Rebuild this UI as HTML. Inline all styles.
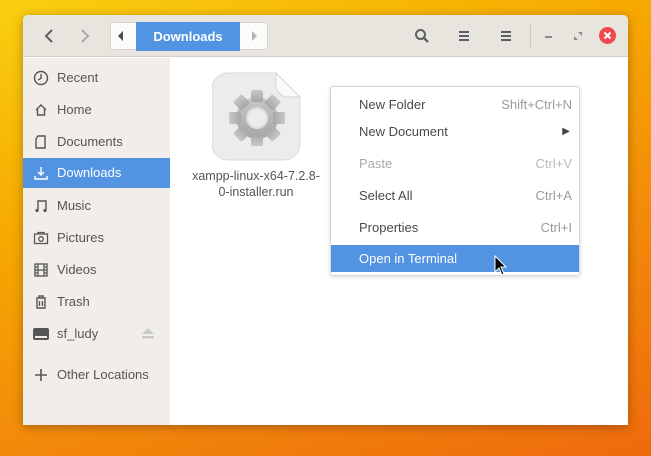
<!DOCTYPE html>
<html><head><meta charset="utf-8"><style>
*{margin:0;padding:0;box-sizing:border-box}
body{width:651px;height:456px;overflow:hidden;font-family:"Liberation Sans",sans-serif;font-size:13px;color:#4d4d4d;
background:linear-gradient(160deg,#f9cf10 0%,#f6a800 35%,#f28a0a 65%,#ee6a0c 100%);position:relative}
.win{position:absolute;left:23px;top:15px;width:605px;height:410px;background:#fff;border-radius:5px 5px 0 0;overflow:hidden;box-shadow:0 2px 10px rgba(0,0,0,.3)}
.hdr{position:absolute;left:0;top:0;width:605px;height:42px;background:#e8e5df;border-bottom:1px solid #d3cfc8}
.side{position:absolute;left:0;top:43px;width:147px;height:367px;background:#f1eeea}
.row{position:absolute;left:0;width:147px;height:29px;line-height:29px;padding-left:34px;font-size:13px;color:#555}
.row svg{position:absolute;left:10px;top:7px}
.sel{background:#5294e2;color:#fff}
.menu{position:absolute;left:330px;top:86px;width:250px;height:190px;background:#fff;border:1px solid #d8d8d8;border-radius:3px;box-shadow:0 1px 4px rgba(0,0,0,.15)}
.mi{position:absolute;left:0;width:248px;height:26px;line-height:26px;padding-left:28px;color:#4a4a4a}
.mi span{position:absolute;right:7px;color:#9a9a9a}
.dis{color:#aaa}
</style></head><body>
<div class="win">
 <div class="hdr">
  <svg style="position:absolute;left:20px;top:13px" width="12" height="16"><path d="M9 2L3 8l6 6" stroke="#5b5f66" stroke-width="2" fill="none"/></svg>
  <svg style="position:absolute;left:56px;top:13px" width="12" height="16"><path d="M3 2l6 6-6 6" stroke="#a8abb0" stroke-width="2" fill="none"/></svg>
  <div style="position:absolute;left:87px;top:7px;width:158px;height:28px;background:#fbfbfa;border:1px solid #d6d3ce;border-radius:3px"></div>
  <svg style="position:absolute;left:94px;top:15px" width="8" height="12"><path d="M6 1L1 6l5 5z" fill="#4b4f55"/></svg>
  <div style="position:absolute;left:113px;top:7px;width:104px;height:29px;background:#5294e2;color:#fff;font-weight:bold;font-size:13px;text-align:center;line-height:29px">Downloads</div>
  <svg style="position:absolute;left:227px;top:15px" width="8" height="12"><path d="M2 1l5 5-5 5z" fill="#b0b3b7"/></svg>
  <svg style="position:absolute;left:391px;top:13px" width="16" height="16"><circle cx="6.5" cy="6.5" r="4.5" stroke="#5b5f66" stroke-width="2" fill="none"/><path d="M10 10l4 4" stroke="#5b5f66" stroke-width="2.4"/></svg>
  <svg style="position:absolute;left:435px;top:15px" width="12" height="12"><path d="M1 2h10M1 6h10M1 10h10" stroke="#5b5f66" stroke-width="2"/></svg>
  <svg style="position:absolute;left:477px;top:15px" width="12" height="12"><path d="M1 2h10M1 6h10M1 10h10" stroke="#5b5f66" stroke-width="2"/></svg>
  <div style="position:absolute;left:507px;top:9px;width:1px;height:24px;background:#cfccc6"></div>
  <div style="position:absolute;left:522px;top:21px;width:7px;height:2px;background:#888"></div>
  <svg style="position:absolute;left:551px;top:17px" width="8" height="8"><path d="M4 0h4v4zM0 4v4h4z" fill="#888"/></svg>
  <div style="position:absolute;left:576px;top:12px;width:17px;height:17px;border-radius:50%;background:#f04a50"></div>
  <svg style="position:absolute;left:576px;top:12px" width="17" height="17"><path d="M5.5 5.5l6 6M11.5 5.5l-6 6" stroke="#fff" stroke-width="2"/></svg>
 </div>
 <div class="side">
  <div class="row" style="top:5px"><svg width="16" height="16"><circle cx="8" cy="8" r="6.5" stroke="#555" stroke-width="1.4" fill="none"/><path d="M8 4v4.5l-3 1.5" stroke="#555" stroke-width="1.4" fill="none"/></svg>Recent</div>
  <div class="row" style="top:37px"><svg width="16" height="16"><path d="M3 8l5-5 5 5M4.5 7v6h7V7" stroke="#555" stroke-width="1.4" fill="none"/></svg>Home</div>
  <div class="row" style="top:69px"><svg width="16" height="16"><path d="M5 2h7v12H3V5z" stroke="#555" stroke-width="1.4" fill="none"/></svg>Documents</div>
  <div class="row sel" style="top:100px;height:30px;line-height:30px"><svg width="16" height="16"><path d="M8 2v8M5 7l3 3 3-3M2 11v3h12v-3" stroke="#fff" stroke-width="1.4" fill="none"/></svg>Downloads</div>
  <div class="row" style="top:133px"><svg width="16" height="16"><path d="M5 12V3h8v9" stroke="#555" stroke-width="1.4" fill="none"/><circle cx="4" cy="12.5" r="1.6" fill="#555"/><circle cx="12" cy="12.5" r="1.6" fill="#555"/></svg>Music</div>
  <div class="row" style="top:165px"><svg width="16" height="16"><rect x="1.5" y="4" width="13" height="9.5" stroke="#555" stroke-width="1.3" fill="none"/><circle cx="8" cy="9" r="2.3" stroke="#555" stroke-width="1.3" fill="none"/><path d="M5 4V2.5h6V4" stroke="#555" stroke-width="1.3" fill="none"/></svg>Pictures</div>
  <div class="row" style="top:197px"><svg width="16" height="16"><rect x="2" y="2" width="12" height="12" stroke="#555" stroke-width="1.3" fill="none"/><path d="M5 2v12M11 2v12M2 8h12M2 5h3M2 11h3M11 5h3M11 11h3" stroke="#555" stroke-width="1.2"/></svg>Videos</div>
  <div class="row" style="top:229px"><svg width="16" height="16"><path d="M3 4h10M6 4V2h4v2M4 5v9h8V5M6.5 7v5M9.5 7v5" stroke="#555" stroke-width="1.4" fill="none"/></svg>Trash</div>
  <div class="row" style="top:261px"><svg width="16" height="16"><rect x="0" y="2" width="16" height="12" rx="2" fill="#555"/><rect x="2" y="10" width="12" height="2" fill="#f1eeea"/></svg>sf_ludy
   <svg style="left:118px;top:8px" width="14" height="13"><path d="M7 1l6 6H1z" fill="#c7c9cc"/><rect x="1" y="9" width="12" height="2.5" fill="#c7c9cc"/></svg></div>
  <div class="row" style="top:302px"><svg width="16" height="16"><path d="M8 2v12M2 8h12" stroke="#555" stroke-width="1.6"/></svg>Other Locations</div>
 </div>
 <svg style="position:absolute;left:189px;top:57px" width="90" height="90">
  <defs><linearGradient id="g" x1="0" y1="0" x2="0" y2="1"><stop offset="0" stop-color="#c8c8c8"/><stop offset="1" stop-color="#a6a6a6"/></linearGradient></defs>
  <path d="M16 1H64L88 25V72A16 16 0 0 1 72 88H16A16 16 0 0 1 0 72V17A16 16 0 0 1 16 1z" fill="#ececec" stroke="#dadada" stroke-width="1"/>
  <path d="M64 1v12a12 12 0 0 0 12 12h12z" fill="#fafafa" stroke="#d4d4d4"/>
  <g transform="translate(45 46)" fill="url(#g)">
   <circle r="21"/>
   <g id="t"><rect x="-6" y="-28" width="12" height="12" rx="2"/></g>
   <use href="#t" transform="rotate(45)"/><use href="#t" transform="rotate(90)"/><use href="#t" transform="rotate(135)"/>
   <use href="#t" transform="rotate(180)"/><use href="#t" transform="rotate(225)"/><use href="#t" transform="rotate(270)"/><use href="#t" transform="rotate(315)"/>
   <circle r="10" fill="none" stroke="#dedede" stroke-width="2"/>
   <circle r="9" fill="#ececec"/>
  </g>
 </svg>
 <div style="position:absolute;left:155px;top:153px;width:156px;text-align:center;font-size:12.5px;line-height:16px;color:#555">xampp-linux-x64-7.2.8-<br>0-installer.run</div>
</div>
<div class="menu">
 <div class="mi" style="top:5px">New Folder<span>Shift+Ctrl+N</span></div>
 <div class="mi" style="top:32px">New Document<span style="color:#444;right:9px;font-size:10px">&#9654;</span></div>
 <div class="mi dis" style="top:64px">Paste<span style="color:#bbb">Ctrl+V</span></div>
 <div class="mi" style="top:96px">Select All<span>Ctrl+A</span></div>
 <div class="mi" style="top:128px">Properties<span>Ctrl+I</span></div>
 <div class="mi" style="top:158px;height:27px;line-height:27px;background:#5294e2;color:#fff">Open in Terminal</div>
</div>
<svg style="position:absolute;left:494px;top:255px" width="14" height="22"><path d="M1 1v16l4-4 3 7 2-1-3-7h5z" fill="#000" stroke="#fff" stroke-width="1"/></svg>
</body></html>
